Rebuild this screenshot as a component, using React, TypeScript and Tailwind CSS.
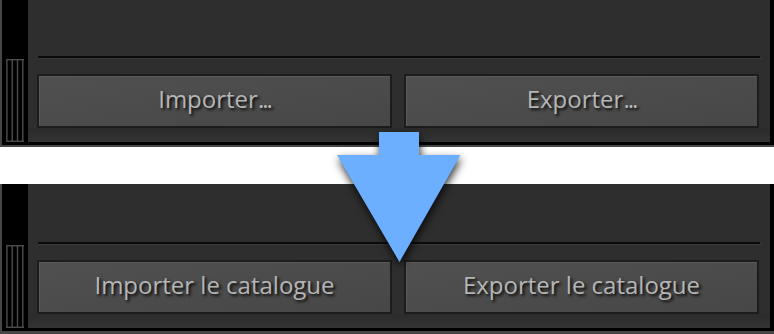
import React from "react";

function Grip() {
  return (
    <svg width="18" height="83" viewBox="0 0 18 83" className="block">
      <rect x="0" y="0" width="18" height="1.4" fill="#4c4c4c" />
      <rect x="0" y="81.6" width="18" height="1.4" fill="#4c4c4c" />
      <rect x="0.2" y="0" width="1.4" height="83" fill="#4c4c4c" />
      <rect x="5.5" y="0" width="1.4" height="83" fill="#4c4c4c" />
      <rect x="10.8" y="0" width="1.4" height="83" fill="#4c4c4c" />
      <rect x="16.1" y="0" width="1.4" height="83" fill="#4c4c4c" />
    </svg>
  );
}

function Btn({ label, dots }: { label: string; dots?: boolean }) {
  return (
    <div className="flex-1 h-[54px] border-2 border-[#1c1c1c] bg-linear-to-br from-[#505050] to-[#474747] shadow-[inset_1px_1px_0_#5a5a5a] flex items-center justify-center pb-[4px] text-[#b5b5b5] text-[24px] font-['Open_Sans',sans-serif] [text-shadow:2px_2px_3px_rgba(0,0,0,0.9)] select-none">
      <span>
        {label}
        {dots ? <span className="tracking-[-2px]">...</span> : null}
      </span>
    </div>
  );
}

function Panel({
  left,
  right,
  second,
}: {
  left: string;
  right: string;
  second?: boolean;
}) {
  return (
    <div className={second ? "flex bg-[#464646] pl-[2px] pb-[3px]" : "flex bg-[#464646] pl-[2px] pb-[2px]"}>
      <div className="flex flex-1 bg-black pr-[4px] pb-[3px]">
        <div className="w-[26px] flex flex-col justify-end pl-[4px]">
          <Grip />
        </div>
        <div className={second ? "flex-1 bg-[#2e2e2e] flex flex-col pt-[58px]" : "flex-1 bg-[#2e2e2e] flex flex-col pt-[56px]"}>
          <div className="ml-[10px] mr-[10px] h-[2px] bg-[#0a0a0a]" />
          <div className="ml-[10px] mr-[8px] h-[1px] bg-[#3a3a3a]" />
          <div className="mt-[15px] flex gap-[12px] pl-[9px] pr-[11px]">
            <Btn label={left} dots={!second} />
            <Btn label={right} dots={!second} />
          </div>
          <div className="h-[14px] bg-linear-to-b from-[#2b2b2b] to-[#333333]" />
        </div>
      </div>
    </div>
  );
}

export default function App() {
  return (
    <div className="relative w-[774px] h-[334px] bg-white flex flex-col overflow-hidden">
      <Panel left="Importer" right="Exporter" />
      <div className="h-[37px]" />
      <Panel left="Importer le catalogue" right="Exporter le catalogue" second />
      <svg
        className="absolute left-0 top-0 pointer-events-none"
        width="774"
        height="334"
        viewBox="0 0 774 334"
        style={{ filter: "drop-shadow(1px 4px 4px rgba(0,0,0,0.8))" }}
      >
        <polygon
          points="379,132 419,132 419,155 460.5,155 399.5,262 337,155 379,155"
          fill="#6caeff"
        />
      </svg>
    </div>
  );
}
